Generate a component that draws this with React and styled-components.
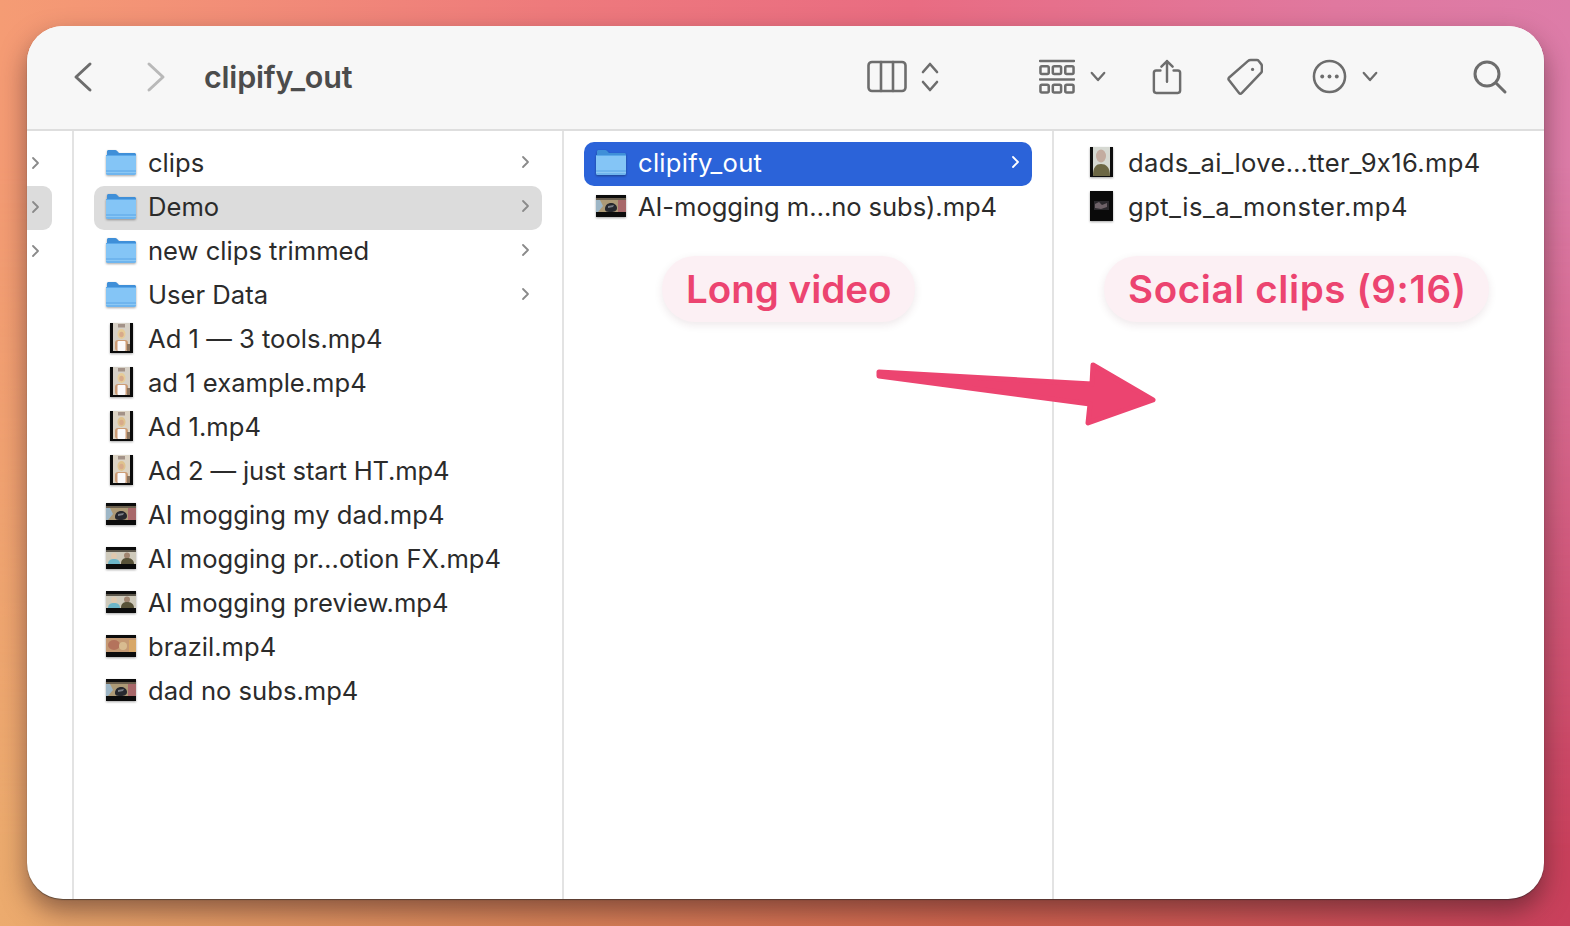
import styled, { createGlobalStyle } from 'styled-components';

const GlobalStyle = createGlobalStyle`
  html, body, #root {
    margin: 0;
    height: 100%;
  }
  body {
    overflow: hidden;
    font-family: Inter, "Liberation Sans", sans-serif;
    font-feature-settings: "calt" 0;
  }
`;

const Desktop = styled.div`
  position: relative;
  box-sizing: border-box;
  height: 926px;
  padding: 26px 26px 27px 27px;
  background: linear-gradient(90deg, #f59c74 0%, #ee7a7c 35%, #e96c82 58%, #e0789f 85%, #dd7ca8 100%);

  &::before {
    content: '';
    position: absolute;
    inset: 0;
    background: linear-gradient(90deg, #ecab6e 0%, #d98358 35%, #d2654f 62%, #c9405c 100%);
    -webkit-mask-image: linear-gradient(to top, #000 8%, transparent 82%);
    mask-image: linear-gradient(to top, #000 8%, transparent 82%);
  }
`;

const Shadow = styled.div`
  position: relative;
  height: 100%;
  border-radius: 36px;
  box-shadow: 0 12px 26px rgba(50, 25, 30, 0.5);
`;

const Window = styled.div`
  position: relative;
  display: flex;
  flex-direction: column;
  height: 100%;
  border-radius: 36px;
  overflow: hidden;
  background: #fff;
  box-shadow: 0 1px 1px rgba(40, 40, 40, 0.55);
`;

const Toolbar = styled.header`
  display: flex;
  align-items: center;
  flex: 0 0 105px;
  box-sizing: border-box;
  padding: 0 0 2px 46px;
  background: #f7f7f7;
  border-bottom: 2px solid #dedede;
`;

const Title = styled.h1`
  margin: 0 0 0 38px;
  width: 663px;
  font-size: 30.5px;
  font-weight: 600;
  letter-spacing: -0.2px;
  color: #4c4c4c;
`;

const ToolIcon = styled.svg`
  flex: none;
  margin-left: ${({ $left }) => $left || 0}px;
  fill: none;
  stroke: ${({ $faded }) => ($faded ? '#b9b9b9' : '#6d6d6d')};
  stroke-width: ${({ $weight }) => $weight || 2.6}px;
  stroke-linecap: round;
  stroke-linejoin: round;
`;

const Columns = styled.div`
  display: flex;
  flex: 1;
  min-height: 0;
`;

const Column = styled.section`
  position: relative;
  box-sizing: border-box;
  flex: 0 0 ${({ $width }) => $width}px;
  padding: 11px 20px 0 20px;
  border-right: ${({ $last }) => ($last ? 'none' : '2px solid #e3e3e3')};
`;

const Rail = styled.section`
  box-sizing: border-box;
  flex: 0 0 47px;
  padding-top: 11px;
  border-right: 2px solid #e3e3e3;
`;

const RailRow = styled.div`
  display: flex;
  align-items: center;
  width: 25px;
  height: 44px;
  padding: 0 0 2px 4px;
  box-sizing: border-box;
  border-radius: 0 9px 9px 0;
  background: ${({ $active }) => ($active ? '#dcdcdc' : 'transparent')};
`;

const RowBox = styled.div`
  display: flex;
  align-items: center;
  box-sizing: border-box;
  height: 44px;
  padding: 0 12px 4px 12px;
  border-radius: 10px;
  background: ${({ $state }) =>
    $state === 'selected' ? '#2b63d9' : $state === 'muted' ? '#dcdcdc' : 'transparent'};
  color: ${({ $state }) => ($state === 'selected' ? '#fff' : '#2b2b2b')};
`;

const Glyph = styled.span`
  display: flex;
  flex: 0 0 30px;
  justify-content: center;
  align-items: center;
  margin-right: 12px;
`;

const Name = styled.span`
  flex: 1;
  font-size: 25.6px;
  letter-spacing: ${({ $track }) => $track || 0}px;
  white-space: nowrap;
`;

const Chevron = styled.svg`
  flex: none;
  fill: none;
  stroke: ${({ $light }) => ($light ? '#fff' : '#8a8a8a')};
  stroke-width: 1.8px;
  stroke-linecap: round;
  stroke-linejoin: round;
`;

const Pill = styled.div`
  position: absolute;
  top: 125px;
  left: ${({ $left }) => $left}px;
  box-sizing: border-box;
  height: 66px;
  padding: 0 ${({ $right }) => $right || 24}px 0 24px;
  border-radius: 33px;
  line-height: 67px;
  font-size: 38.5px;
  font-weight: 600;
  letter-spacing: ${({ $spread }) => $spread || 0}px;
  white-space: nowrap;
  color: #ec4470;
  background: #fcf0f4;
  box-shadow: 0 3px 8px rgba(90, 30, 50, 0.1);
`;

const Arrow = styled.svg`
  position: absolute;
  left: 842px;
  top: 330px;
`;

const Thumb = styled.svg`
  display: block;
  filter: ${({ $sharp }) => ($sharp ? '' : 'blur(0.4px)')} drop-shadow(0 1px 1px rgba(0, 0, 0, 0.35));
`;

const Folder = () => (
  <Thumb $sharp width="30" height="27" viewBox="0 0 30 27">
    <path d="M1 5V2.600C1 1.600 1.700 1 2.600 1h6.600c.7 0 1.200.3 1.700.8L13 4h15.400c.9 0 1.600.7 1.600 1.600V9H1z" fill="#3f8fd8" />
    <path d="M0 6.500h30V24c0 1.200-.8 2-2 2H2c-1.200 0-2-.8-2-2z" fill="#84c5f6" />
    <rect y="6" width="30" height="1" fill="#5aa8ea" />
    <path d="M0 21h30v3c0 1.200-.8 2-2 2H2c-1.200 0-2-.8-2-2z" fill="#6fb5ee" />
    <rect y="23" width="30" height="1" fill="#8cc8f4" />
  </Thumb>
);

const Portrait = ({ wall = '#d6d0c6', hair = '#e6cc98', top = '#fbfafc' }) => (
  <Thumb width="23" height="30" viewBox="0 0 23 30">
    <rect width="23" height="30" fill="#0b0b0b" />
    <rect x="3" width="17" height="28" fill={wall} />
    <rect x="8" y="1" width="7" height="3.500" fill="#a39288" />
    <ellipse cx="11.500" cy="11" rx="4" ry="5" fill={hair} />
    <ellipse cx="11.500" cy="11.500" rx="2.200" ry="2.800" fill="#d8aa8a" />
    <rect x="5" y="17" width="13" height="11" rx="3" fill="#cc9c76" />
    <rect x="7.500" y="18" width="8" height="10" rx="1" fill={top} />
    <rect x="17" y="21" width="3" height="7" fill="#8a7460" />
  </Thumb>
);

const Wide = ({ scene }) => (
  <Thumb width="30" height="22" viewBox="0 0 30 22">
    <rect width="30" height="22" fill="#0c0c0c" />
    {scene === 'desk' && (
      <>
        <rect y="3" width="30" height="14" fill="#ad9a76" />
        <rect x="22" y="3" width="8" height="14" fill="#a8686a" />
        <rect y="3" width="30" height="2" fill="#6a5f4e" />
        <path d="M0 5l4 0 3 6-5 6H0z" fill="#9db6c6" />
        <path d="M9 14c0-4 3-6 6-6s6 2 6 5-3 4-6 4-6 0-6-3z" fill="#26282e" />
        <path d="M12 11l6-1-1 2-5 1z" fill="#7b7f87" />
      </>
    )}
    {scene === 'couple' && (
      <>
        <rect y="3" width="30" height="14" fill="#cfcabb" />
        <rect y="3" width="30" height="2" fill="#5c574c" />
        <circle cx="8" cy="9" r="3" fill="#e0c8ae" />
        <path d="M2 17c0-4 3-5 6-5s6 1 6 5z" fill="#6db6c9" />
        <circle cx="21" cy="8.500" r="3" fill="#a08570" />
        <path d="M15 17c0-5 3-6 6-6s7 1 7 6z" fill="#585238" />
      </>
    )}
    {scene === 'brazil' && (
      <>
        <rect y="3" width="30" height="14" fill="#c59a74" />
        <ellipse cx="8" cy="10" rx="6" ry="5" fill="#b4735c" />
        <ellipse cx="17" cy="11" rx="4" ry="4" fill="#d8bc90" />
        <rect x="23" y="5" width="7" height="12" fill="#d8a868" />
      </>
    )}
  </Thumb>
);

const VerticalDark = () => (
  <Thumb width="23" height="30" viewBox="0 0 23 30">
    <rect width="23" height="30" fill="#0a0a0a" />
    <rect x="4" y="10" width="15" height="9" fill="#2a282c" />
    <path d="M5 13l4-2 3 3 5-2v4l-6 2-6-1z" fill="#6e6268" />
  </Thumb>
);

const VerticalDad = () => (
  <Thumb width="23" height="30" viewBox="0 0 23 30">
    <rect width="23" height="30" fill="#0e0e0e" />
    <rect x="3" width="17" height="29" fill="#d6d9d2" />
    <ellipse cx="11" cy="9" rx="5" ry="6.500" fill="#c3aca0" />
    <path d="M3 29c0-9 3-12 8-12s9 3 9 12z" fill="#6c6744" />
  </Thumb>
);

const RowChevron = ({ light }) => (
  <Chevron $light={light} width="9" height="14" viewBox="0 0 9 14">
    <path d="M2 2l5 5-5 5" />
  </Chevron>
);

const Row = ({ icon, name, state, more, track }) => (
  <RowBox $state={state}>
    <Glyph>{icon}</Glyph>
    <Name $track={track}>{name}</Name>
    {more && <RowChevron light={state === 'selected'} />}
  </RowBox>
);

const mom = <Portrait />;
const momWarm = <Portrait wall="#dcd3c4" hair="#dfc28e" />;

const demoFiles = [
  { name: 'clips', icon: <Folder />, more: true },
  { name: 'Demo', icon: <Folder />, more: true, state: 'muted' },
  { name: 'new clips trimmed', icon: <Folder />, more: true },
  { name: 'User Data', icon: <Folder />, more: true },
  { name: 'Ad 1 — 3 tools.mp4', icon: mom },
  { name: 'ad 1 example.mp4', icon: mom },
  { name: 'Ad 1.mp4', icon: momWarm },
  { name: 'Ad 2 — just start HT.mp4', icon: momWarm, track: -0.16 },
  { name: 'AI mogging my dad.mp4', icon: <Wide scene="desk" /> },
  { name: 'AI mogging pr…otion FX.mp4', icon: <Wide scene="couple" /> },
  { name: 'AI mogging preview.mp4', icon: <Wide scene="couple" /> },
  { name: 'brazil.mp4', icon: <Wide scene="brazil" /> },
  { name: 'dad no subs.mp4', icon: <Wide scene="desk" /> },
];

function App() {
  return (
    <>
      <GlobalStyle />
      <Desktop>
        <Shadow>
          <Window>
            <Toolbar>
              <ToolIcon width="20" height="32" viewBox="0 0 20 32" $weight={3}>
                <path d="M17 3L3 16l14 13" />
              </ToolIcon>
              <ToolIcon $left={53} $faded width="20" height="32" viewBox="0 0 20 32" $weight={3}>
                <path d="M3 3l14 13L3 29" />
              </ToolIcon>
              <Title>clipify_out</Title>
              <ToolIcon width="40" height="33" viewBox="0 0 40 33">
                <rect x="1.500" y="2" width="37" height="29" rx="3.500" />
                <path d="M14 2v29M26 2v29" />
              </ToolIcon>
              <ToolIcon $left={14} width="18" height="30" viewBox="0 0 18 30">
                <path d="M2 10l7-8 7 8M2 20l7 8 7-8" />
              </ToolIcon>
              <ToolIcon $left={100} width="36" height="36" viewBox="0 0 37 36">
                <path d="M1 1.500h35M1 20.500h35" />
                <rect x="1.500" y="7" width="8.500" height="8" rx="1.500" />
                <rect x="14.200" y="7" width="8.500" height="8" rx="1.500" />
                <rect x="27" y="7" width="8.500" height="8" rx="1.500" />
                <rect x="1.500" y="26" width="8.500" height="8" rx="1.500" />
                <rect x="14.200" y="26" width="8.500" height="8" rx="1.500" />
                <rect x="27" y="26" width="8.500" height="8" rx="1.500" />
              </ToolIcon>
              <ToolIcon $left={15} width="16" height="11" viewBox="0 0 18 12">
                <path d="M2 2l7 8 7-8" />
              </ToolIcon>
              <ToolIcon $left={46} width="30" height="36" viewBox="0 0 32 38">
                <path d="M9 12H4.500C2.800 12 2 13 2 14.500v19C2 35 2.800 36 4.500 36h23c1.700 0 2.500-1 2.500-2.500v-19c0-1.500-.8-2.500-2.500-2.500H23" />
                <path d="M16 24V2M10 8l6-6 6 6" />
              </ToolIcon>
              <ToolIcon $left={45} width="36" height="38" viewBox="0 0 38 40">
                <path d="M25 2h6.500c.8 0 1.400.3 1.800.9l2.800 3.500c.5.600.7 1.200.7 2v5c0 .8-.2 1.400-.7 2L15.500 37c-.8 1-2 1-2.800 0L2 23.200c-.6-.8-.6-1.600 0-2.400L22 3.200C23 2.300 24 2 25 2z" />
                <circle cx="27" cy="12" r="1.700" fill="#6d6d6d" stroke="none" />
              </ToolIcon>
              <ToolIcon $left={49} width="35" height="35" viewBox="0 0 36 36">
                <circle cx="18" cy="18" r="16" />
                <circle cx="10.500" cy="18" r="2" fill="#6d6d6d" stroke="none" />
                <circle cx="18" cy="18" r="2" fill="#6d6d6d" stroke="none" />
                <circle cx="25.500" cy="18" r="2" fill="#6d6d6d" stroke="none" />
              </ToolIcon>
              <ToolIcon $left={15} width="16" height="11" viewBox="0 0 18 12">
                <path d="M2 2l7 8 7-8" />
              </ToolIcon>
              <ToolIcon $left={94} width="36" height="36" viewBox="0 0 36 36" $weight={3}>
                <circle cx="15" cy="15" r="12" />
                <path d="M24 24l9 9" />
              </ToolIcon>
            </Toolbar>
            <Columns>
              <Rail>
                <RailRow><RowChevron /></RailRow>
                <RailRow $active><RowChevron /></RailRow>
                <RailRow><RowChevron /></RailRow>
              </Rail>
              <Column $width={490}>
                {demoFiles.map((file) => (
                  <Row key={file.name} {...file} />
                ))}
              </Column>
              <Column $width={490}>
                <Row name="clipify_out" icon={<Folder />} state="selected" more track={0.27} />
                <Row name="AI-mogging m…no subs).mp4" icon={<Wide scene="desk" />} track={-0.08} />
                <Pill $left={98}>Long video</Pill>
              </Column>
              <Column $width={490} $last>
                <Row name="dads_ai_love…tter_9x16.mp4" icon={<VerticalDad />} track={0.32} />
                <Row name="gpt_is_a_monster.mp4" icon={<VerticalDark />} track={0.5} />
                <Pill $left={50} $right={22} $spread={0.62}>Social clips (9:16)</Pill>
              </Column>
            </Columns>
            <Arrow width="300" height="85" viewBox="0 0 300 85">
              <path
                d="M10 16L223 28 224 9 284 44 219 67 221 48 10 20z"
                fill="#ec4470"
                stroke="#ec4470"
                strokeWidth="5"
                strokeLinejoin="round"
              />
            </Arrow>
          </Window>
        </Shadow>
      </Desktop>
    </>
  );
}

export default App;
